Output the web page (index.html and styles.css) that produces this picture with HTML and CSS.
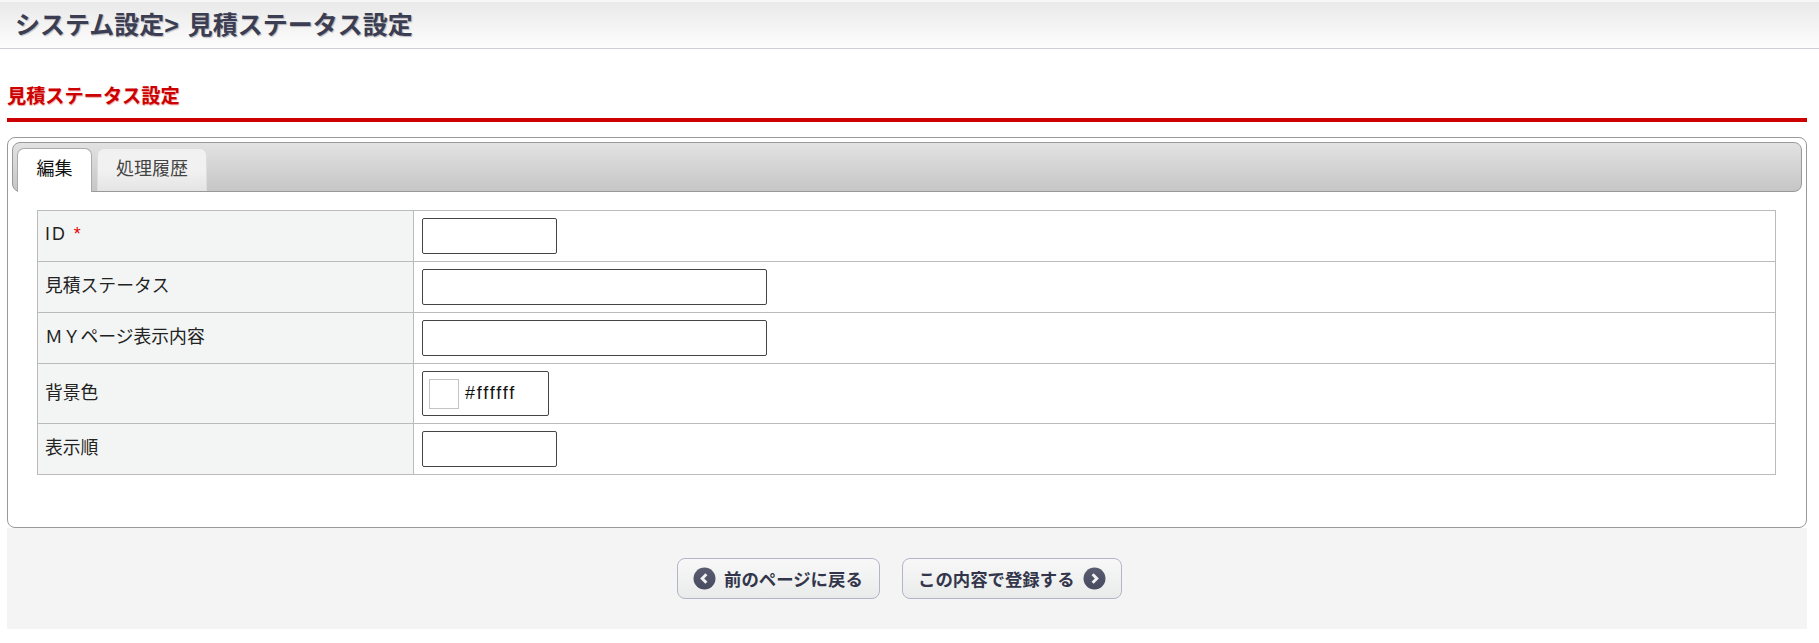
FILE: index.html
```html
<!DOCTYPE html>
<html lang="ja">
<head>
  <meta charset="UTF-8">
  <title>見積ステータス設定</title>
  <link rel="stylesheet" href="styles.css">
</head>
<body>
  <header class="page-head">
    <h1>システム設定&gt; 見積ステータス設定</h1>
  </header>

  <div class="content">
    <h2 class="section-title">見積ステータス設定</h2>

    <div class="panel">
      <div class="tabs">
        <div class="tab active">編集</div>
        <div class="tab">処理履歴</div>
      </div>

      <table class="form-table">
        <tr>
          <th class="id-label">ID <span class="req">*</span></th>
          <td><input class="field short" type="text"></td>
        </tr>
        <tr>
          <th>見積ステータス</th>
          <td><input class="field long" type="text"></td>
        </tr>
        <tr>
          <th>ＭＹページ表示内容</th>
          <td><input class="field long" type="text"></td>
        </tr>
        <tr class="color-row">
          <th>背景色</th>
          <td>
            <div class="color-field">
              <span class="swatch"></span>
              <span class="color-code">#ffffff</span>
            </div>
          </td>
        </tr>
        <tr>
          <th>表示順</th>
          <td><input class="field short" type="text"></td>
        </tr>
      </table>
    </div>

    <div class="actions">
      <a class="btn back">
        <svg class="btn-icon" viewBox="0 0 22 22">
          <defs>
            <linearGradient id="ball-a" x1="0" y1="0" x2="0" y2="1">
              <stop offset="0" stop-color="#5a5c70"/>
              <stop offset="1" stop-color="#484a60"/>
            </linearGradient>
          </defs>
          <circle cx="11" cy="11" r="10.5" fill="url(#ball-a)"/>
          <path d="M12.8 7 L8.8 11 L12.8 15" fill="none" stroke="#f2f2f2" stroke-width="2.8"/>
        </svg>
        <span>前のページに戻る</span>
      </a>
      <a class="btn next">
        <span>この内容で登録する</span>
        <svg class="btn-icon" viewBox="0 0 22 22">
          <defs>
            <linearGradient id="ball-b" x1="0" y1="0" x2="0" y2="1">
              <stop offset="0" stop-color="#5a5c70"/>
              <stop offset="1" stop-color="#484a60"/>
            </linearGradient>
          </defs>
          <circle cx="11" cy="11" r="10.5" fill="url(#ball-b)"/>
          <path d="M9.2 7 L13.2 11 L9.2 15" fill="none" stroke="#f2f2f2" stroke-width="2.8"/>
        </svg>
      </a>
    </div>
  </div>
</body>
</html>
```

FILE: styles.css
```css
/* General page styles */
body {
  font-family: "Liberation Sans", "Noto Sans CJK JP", sans-serif;
  background-color: #fff;
  margin: 0;
  padding: 0;
  color: #222;
}

.page-head {
  box-sizing: border-box;
  height: 49px;
  padding-left: 15px;
  background: linear-gradient(#e9e9e9, #fdfdfd);
  border-top: 2px solid #f6f6f6;
  border-bottom: 1px solid #cfcfd8;
}

.page-head h1 {
  margin: 0;
  font-size: 25px;
  line-height: 46px;
  font-weight: bold;
  word-spacing: 2px;
  color: #3b3e52;
  text-shadow: 1px 1px 1px rgba(40, 40, 60, 0.3);
}

.content {
  padding: 0 12px 0 7px;
}

.section-title {
  box-sizing: border-box;
  height: 73px;
  margin: 0;
  padding-top: 34px;
  font-size: 19.2px;
  line-height: 28px;
  font-weight: bold;
  color: #cc0000;
  text-shadow: 0.5px 0.5px 1px rgba(204, 0, 0, 0.4);
  border-bottom: 4px solid #cc0000;
}

/* Panel with tabs */
.panel {
  box-sizing: border-box;
  height: 391px;
  margin-top: 15px;
  padding: 4px;
  background: #fff;
  border: 1px solid #999;
  border-radius: 8px;
}

.tabs {
  box-sizing: border-box;
  display: flex;
  align-items: flex-end;
  gap: 5px;
  height: 50px;
  padding-left: 4px;
  background: linear-gradient(#e2e2e2, #c6c6c6);
  border: 1px solid #999;
  border-radius: 8px;
}

.tab {
  box-sizing: border-box;
  height: 43px;
  width: 110px;
  font-size: 18px;
  line-height: 41px;
  text-align: center;
  color: #444;
  background: linear-gradient(#f1f1f1 50%, #e4e4e4);
  border: 1px solid #ddd;
  border-bottom: 0;
  border-radius: 7px 7px 0 0;
}

.tab.active {
  height: 44px;
  width: 75px;
  margin-bottom: -1px;
  color: #111;
  background: #fff;
  border-color: #aaa;
}

/* Form table */
.form-table {
  box-sizing: border-box;
  width: 1739px;
  margin: 18px 0 0 25px;
  border-collapse: separate;
  border-spacing: 0;
  border-top: 1px solid #bbb;
  border-left: 1px solid #bbb;
  font-size: 17.8px;
}

.form-table th,
.form-table td {
  box-sizing: border-box;
  height: 51px;
  padding: 0 7px;
  border-right: 1px solid #bbb;
  border-bottom: 1px solid #bbb;
}

.form-table td {
  padding-left: 8px;
}

.form-table th {
  width: 376px;
  font-weight: normal;
  text-align: left;
  background-color: #f3f5f4;
  padding-bottom: 6px;
}

.form-table .color-row th,
.form-table .color-row td {
  height: 60px;
}

.form-table th.id-label {
  letter-spacing: 2px;
  padding-bottom: 4px;
}

.req {
  color: #e00000;
}

.field {
  display: block;
  box-sizing: border-box;
  height: 36px;
  padding: 0 6px;
  background: #fff;
  border: 1px solid #444;
  border-radius: 2px;
}

.field.short {
  width: 135px;
}

.field.long {
  width: 345px;
}

.color-field {
  box-sizing: border-box;
  display: flex;
  align-items: center;
  gap: 6px;
  width: 127px;
  height: 45px;
  padding-left: 6px;
  font-size: 18px;
  color: #111;
  border: 1px solid #444;
  border-radius: 2px;
}

.swatch {
  box-sizing: border-box;
  width: 30px;
  height: 30px;
  background: #fff;
  border: 1px solid #c4c4c4;
}

.color-code {
  letter-spacing: 1.8px;
}

/* Bottom buttons */
.actions {
  box-sizing: border-box;
  display: flex;
  justify-content: center;
  gap: 22px;
  height: 101px;
  padding: 30px 15px 0 0;
  background-color: #f4f4f4;
}

.btn {
  box-sizing: border-box;
  display: flex;
  align-items: center;
  gap: 8px;
  height: 41px;
  padding-left: 15px;
  font-size: 17.4px;
  font-weight: bold;
  color: #33364a;
  background: linear-gradient(#f8f8f8, #e9ebea);
  border: 1px solid #b4b4c8;
  border-radius: 8px;
}

.btn.back {
  width: 203px;
}

.btn.next {
  width: 220px;
}

.btn-icon {
  width: 23px;
  height: 23px;
  flex: none;
}
```
